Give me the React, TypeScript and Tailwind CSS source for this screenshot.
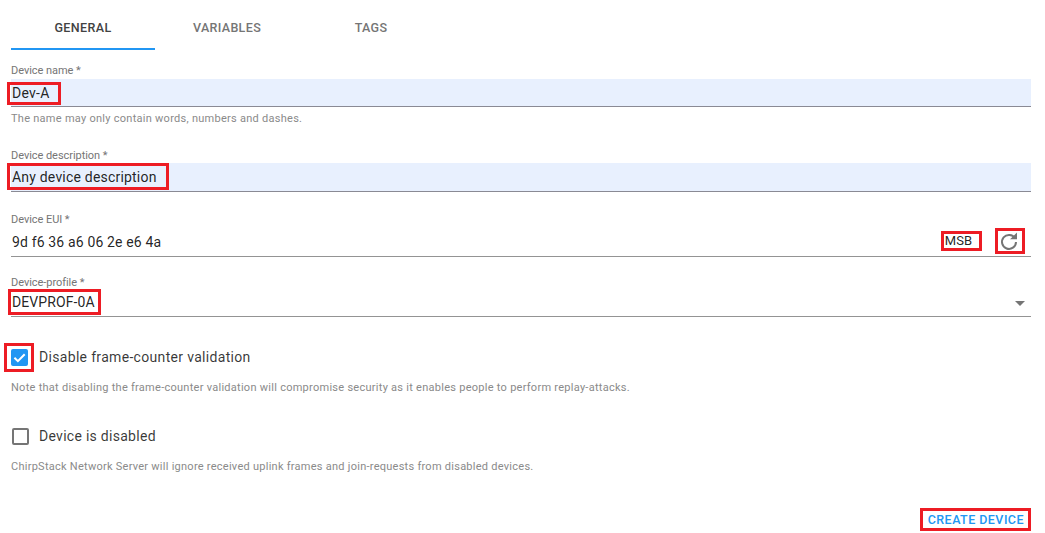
import React from "react";

const font = { fontFamily: "Roboto, sans-serif" };

function Mark({ className, children }: { className: string; children: React.ReactNode }) {
  return (
    <span className="relative inline-flex items-center">
      {children}
      <span className={"absolute border-[3px] border-[#ed1c24] pointer-events-none " + className} />
    </span>
  );
}

function Label({ children, top }: { children: React.ReactNode; top: string }) {
  return <div className={"text-[11px] leading-[13px] tracking-[-0.05px] text-[#757575] " + top}>{children}</div>;
}

function Check({ checked }: { checked?: boolean }) {
  if (checked) {
    return (
      <svg width="17" height="17" viewBox="0 0 17 17" className="block">
        <rect x="0" y="0" width="17" height="17" rx="2" fill="#2196f3" />
        <path d="M3.4 8.8l3.5 3.4 6.8-7" fill="none" stroke="#fff" strokeWidth="2" />
      </svg>
    );
  }
  return <span className="block w-[17px] h-[17px] rounded-[2px] border-2 border-[#757575]" />;
}

export default function App() {
  return (
    <div style={font} className="w-[1045px] h-[533px] bg-white overflow-hidden pl-[11px] pr-[14px] text-[#000000de]">
      <div className="flex h-[50px]">
        <div className="w-[144px] h-[50px] pt-[21px] text-center text-[12.5px] leading-[14px] font-medium tracking-[0.4px] text-[#424242] border-b-2 border-[#2196f3]">GENERAL</div>
        <div className="w-[144px] pt-[21px] text-center text-[12.5px] leading-[14px] font-medium tracking-[0.35px] text-[#757575]">VARIABLES</div>
        <div className="w-[144px] pt-[21px] text-center text-[12.5px] leading-[14px] font-medium tracking-[0.35px] text-[#757575]">TAGS</div>
      </div>

      <Label top="mt-[14px]">Device name *</Label>
      <div className="mt-[2px] h-[28px] bg-[#e8f0fe] border-b border-[#8a8a94] flex items-center text-[14px] tracking-[0.25px]">
        <Mark className="-left-[4px] -right-[11px] -top-[3px] -bottom-[4px]"><span className="leading-[16px] pl-px">Dev-A</span></Mark>
      </div>
      <div className="mt-[5px] text-[11px] leading-[13px] tracking-[0.27px] text-[#8a8a8a]">The name may only contain words, numbers and dashes.</div>

      <Label top="mt-[24px]">Device description *</Label>
      <div className="mt-[1px] h-[29px] bg-[#e8f0fe] border-b border-[#8a8a94] flex items-center text-[14px] tracking-[0.2px]">
        <Mark className="-left-[4px] -right-[12px] -top-[6px] -bottom-[5px]"><span className="leading-[16px] pl-px">Any device description</span></Mark>
      </div>

      <Label top="mt-[21px]">Device EUI *</Label>
      <div className="mt-[2px] h-[29px] border-b border-[#949494] flex items-center justify-between pl-px text-[14px] tracking-[0.15px]">
        <span className="leading-[16px]">9d f6 36 a6 06 2e e6 4a</span>
        <div className="flex items-center pr-[12px] pb-[2px]">
          <Mark className="-left-[4px] -right-[10px] -top-[3px] -bottom-[3px]">
            <span className="text-[13px] leading-[14px] tracking-normal">MSB</span>
          </Mark>
          <span className="w-[27px]" />
          <Mark className="-left-[4px] -right-[6px] -top-[3px] -bottom-[3px]">
            <svg width="20" height="20" viewBox="0 0 20 20" className="block" fill="none">
              <path d="M16 7.3A7 7 0 1 0 17 11" stroke="#757575" strokeWidth="2" />
              <path d="M11 8.2h7V1.6z" fill="#757575" />
            </svg>
          </Mark>
        </div>
      </div>

      <Label top="mt-[19px]">Device-profile *</Label>
      <div className="mt-[1px] h-[27px] border-b border-[#949494] flex items-center justify-between pb-[2px] text-[14px] tracking-[0.1px]">
        <Mark className="-left-[3px] -right-[6px] -top-[5px] -bottom-[5px]"><span className="leading-[16px] pl-px">DEVPROF-0A</span></Mark>
        <span className="mr-[6px] mt-[3px] w-0 h-0 border-x-[5px] border-x-transparent border-t-[5px] border-t-[#757575]" />
      </div>

      <div className="mt-[31px] h-[18px] flex items-center">
        <Mark className="-left-[7px] -right-[6px] -top-[6px] -bottom-[6px]"><Check checked /></Mark>
        <span className="ml-[11px] text-[14px] tracking-[0.32px] text-[#000000c9]">Disable frame-counter validation</span>
      </div>
      <div className="mt-[15px] text-[11px] leading-[13px] tracking-[0.27px] text-[#8a8a8a]">Note that disabling the frame-counter validation will compromise security as it enables people to perform replay-attacks.</div>

      <div className="mt-[33px] h-[18px] flex items-center pl-px">
        <Check />
        <span className="ml-[10px] text-[14px] tracking-[0.28px] text-[#000000c9]">Device is disabled</span>
      </div>
      <div className="mt-[15px] text-[11px] leading-[13px] tracking-[0.26px] text-[#8a8a8a]">ChirpStack Network Server will ignore received uplink frames and join-requests from disabled devices.</div>

      <div className="mt-[40px] flex justify-end pr-[7px]">
        <Mark className="-left-[8px] -right-[7px] -top-[5px] -bottom-[4px]">
          <span className="text-[12.5px] leading-[14px] font-medium tracking-[0.45px] text-[#2196f3]">CREATE DEVICE</span>
        </Mark>
      </div>
    </div>
  );
}
